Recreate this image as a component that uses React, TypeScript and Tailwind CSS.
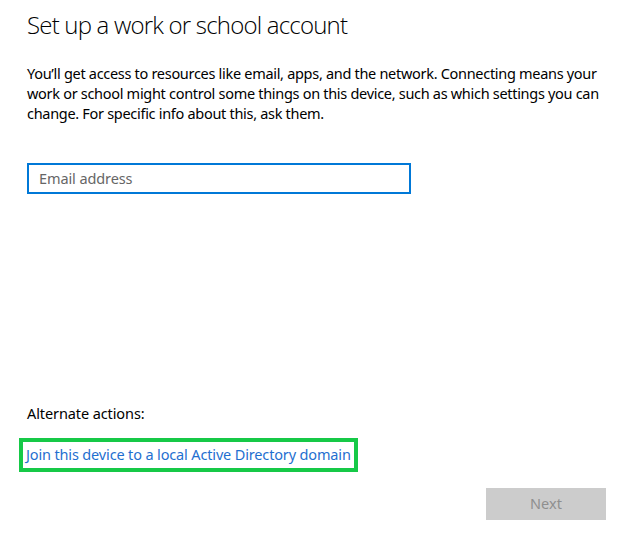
import React from "react";

export default function App() {
  return (
    <div
      className="relative w-[620px] h-[536px] bg-white overflow-hidden"
      style={{ fontFamily: '"Noto Sans", "Open Sans", sans-serif' }}
    >
      <div className="flex flex-col h-full pl-[27px] pr-[14px]">
        <h1
          className="mt-[9px] text-[24px] leading-[32px] font-light text-black tracking-[-0.8px] whitespace-nowrap"
          style={{ fontFamily: '"Open Sans", "Noto Sans", sans-serif' }}
        >
          Set up a work or school account
        </h1>
        <p className="mt-[22px] text-[14.5px] leading-[20px] text-black tracking-[-0.3px] whitespace-nowrap">
          You’ll get access to resources like email, apps, and the network. Connecting means your
          <br />
          work or school might control some things on this device, such as which settings you can
          <br />
          change. For specific info about this, ask them.
        </p>
        <div className="mt-[40px] w-[384px] h-[31px] border-2 border-[#0078d7] flex items-center px-[10px]">
          <span className="text-[14.5px] text-[#666666] tracking-[-0.1px]">Email address</span>
        </div>
        <div className="mt-[209px] text-[14.5px] leading-[20px] text-black tracking-[-0.1px]">Alternate actions:</div>
        <div className="mt-[15px] -ml-[8px] self-start border-[4px] border-[#16c947] px-[3px] h-[34px] flex items-center">
          <span className="text-[14.5px] text-[#1f6fd0] tracking-[-0.15px] whitespace-nowrap">
            Join this device to a local Active Directory domain
          </span>
        </div>
        <div className="mt-[16px] self-end w-[120px] h-[32px] bg-[#cccccc] flex items-center justify-center">
          <span className="text-[14.5px] text-[#8f8f8f]">Next</span>
        </div>
      </div>
    </div>
  );
}
